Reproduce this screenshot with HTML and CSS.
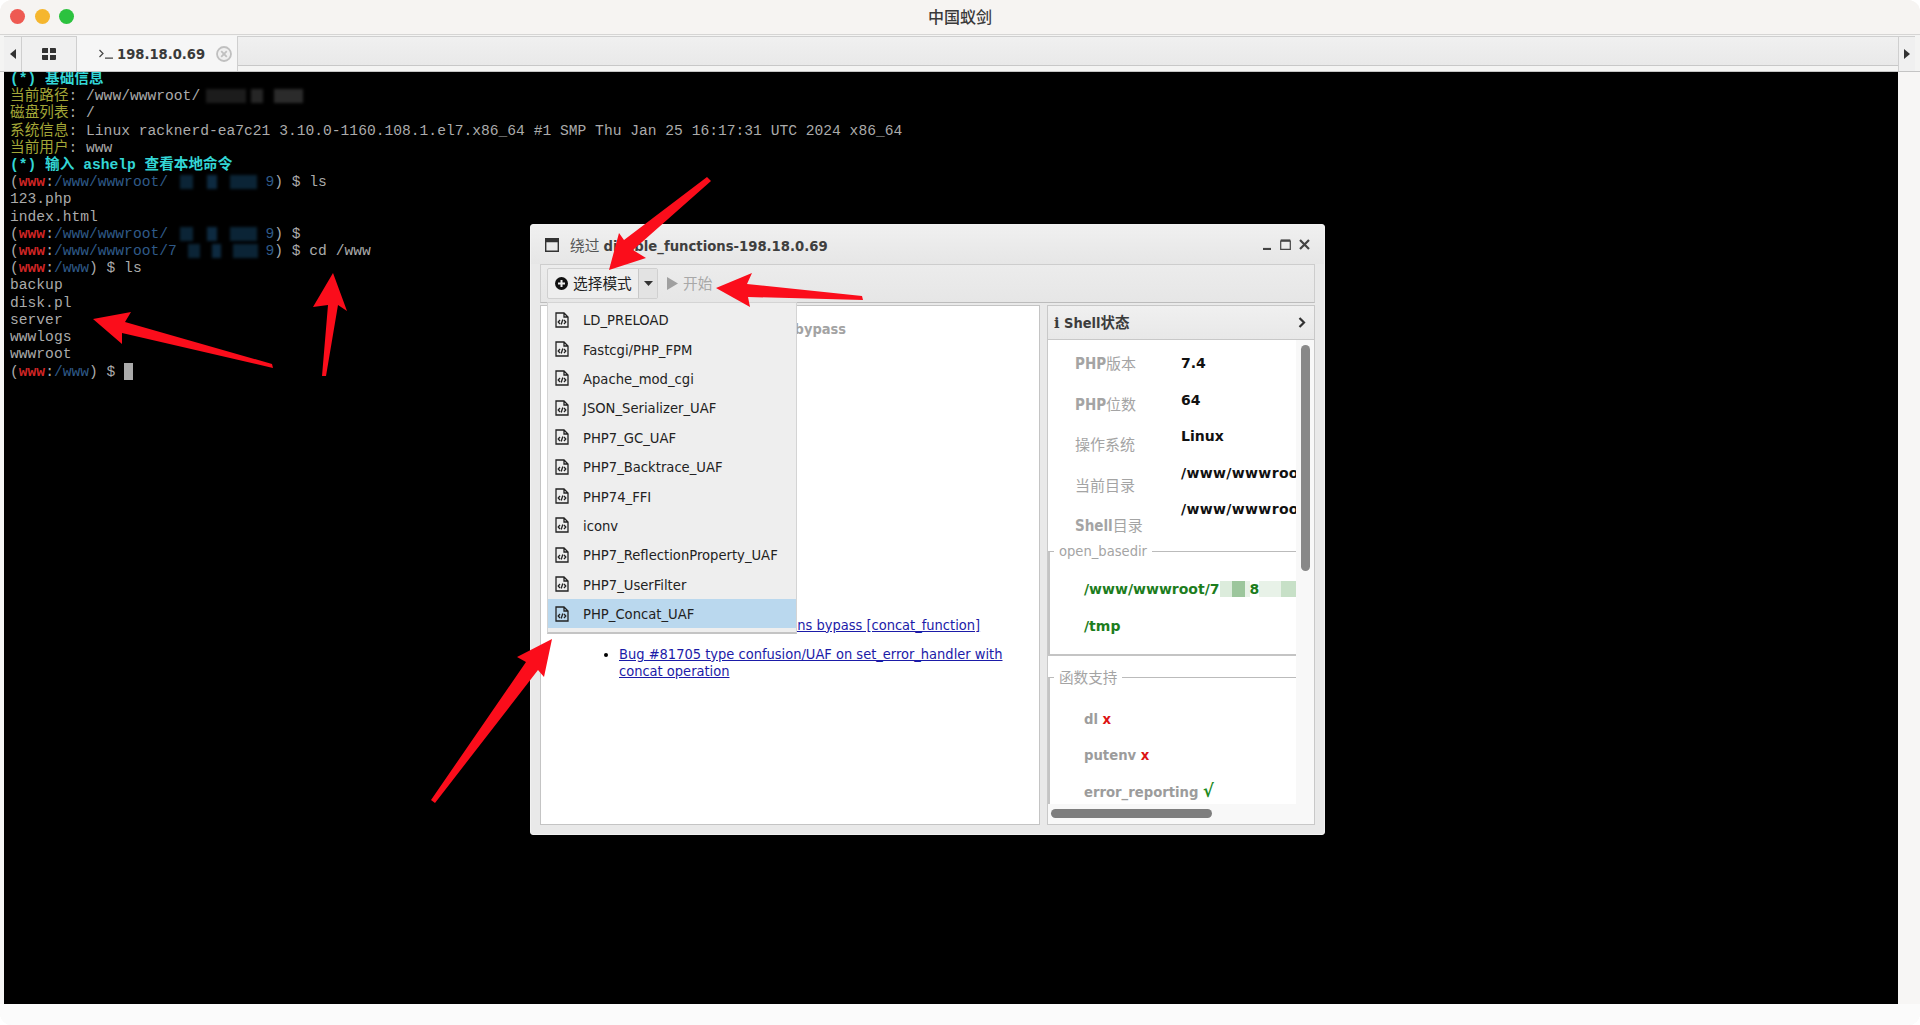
FILE: index.html
```html
<!DOCTYPE html>
<html lang="zh-CN">
<head>
<meta charset="utf-8">
<title>中国蚁剑</title>
<link rel="stylesheet" href="styles.css">
</head>
<body>
<div class="app">
  <header class="titlebar">
    <div class="lights"><i class="light red"></i><i class="light yellow"></i><i class="light green"></i></div>
    <div class="apptitle">中国蚁剑</div>
  </header>
  <nav class="tabbar">
    <div class="tabarrow"><svg width="6" height="10" viewBox="0 0 6 10"><path d="M6 0V10L0 5Z"/></svg></div>
    <div class="tabhome"><svg width="14" height="12" viewBox="0 0 14 12"><path d="M0 1q0-1 1-1H6V5H0ZM8 0H13q1 0 1 1V5H8ZM0 7H6V12H1q-1 0-1-1ZM8 7H14V11q0 1-1 1H8Z"/></svg></div>
    <div class="tab">
      <svg class="tabprompt" width="14" height="10" viewBox="0 0 14 10"><path d="M.5 1 4 4.5.5 8M6 9.2H14"/></svg>
      <span class="tabtext">198.18.0.69</span>
      <svg class="tabclose" width="16" height="16" viewBox="0 0 16 16"><circle cx="8" cy="8" r="7"/><path d="M5.2 5.2 10.8 10.8M10.8 5.2 5.2 10.8"/></svg>
    </div>
    <div class="tabrest"></div>
    <div class="tabarrow right"><svg width="6" height="10" viewBox="0 0 6 10"><path d="M0 0V10L6 5Z"/></svg></div>
  </nav>
  <main class="workspace">
    <pre class="terminal"><span class="head">(*) 基础信息</span>
<span class="label">当前路径</span>: /www/wwwroot/<i class="mask gray"></i>
<span class="label">磁盘列表</span>: /
<span class="label">系统信息</span>: Linux racknerd-ea7c21 3.10.0-1160.108.1.el7.x86_64 #1 SMP Thu Jan 25 16:17:31 UTC 2024 x86_64
<span class="label">当前用户</span>: www
<span class="head">(*) 输入 ashelp 查看本地命令</span>
(<b class="user">www</b>:<span class="path">/www/wwwroot/</span><i class="mask"></i><span class="path">9</span>) $ ls
123.php
index.html
(<b class="user">www</b>:<span class="path">/www/wwwroot/</span><i class="mask"></i><span class="path">9</span>) $
(<b class="user">www</b>:<span class="path">/www/wwwroot/7</span><i class="mask short"></i><span class="path">9</span>) $ cd /www
(<b class="user">www</b>:<span class="path">/www</span>) $ ls
backup
disk.pl
server
wwwlogs
wwwroot
(<b class="user">www</b>:<span class="path">/www</span>) $ <i class="cursor"></i></pre>
  </main>
  <div class="footer"></div>

  <section class="window">
    <div class="wintitle">
      <svg class="winicon" width="14" height="14" viewBox="0 0 14 14"><path d="M.7.7H13.3V13.3H.7ZM.7 3.6H13.3" /><path class="thick" d="M.7 2.2H13.3"/></svg>
      <span class="wintext"><span class="cn">绕过</span> <b>disable_functions-198.18.0.69</b></span>
      <div class="winctl">
        <svg width="10" height="10" viewBox="0 0 10 10"><path d="M1 9H9" class="ctl"/></svg>
        <svg width="11" height="11" viewBox="0 0 11 11"><path d="M.7 2H10.3V10.3H.7Z" class="ctlthin"/><path d="M.7 1.5H10.3" class="ctl"/></svg>
        <svg width="11" height="11" viewBox="0 0 11 11"><path d="M1 1 10 10M10 1 1 10" class="ctl"/></svg>
      </div>
    </div>
    <div class="toolbar">
      <div class="btngroup">
        <div class="btnmain">
          <svg width="13" height="13" viewBox="0 0 13 13"><circle cx="6.5" cy="6.5" r="6.5"/><path class="plus" d="M6.5 3V10M3 6.5H10"/></svg>
          <span class="btnlabel">选择模式</span>
        </div>
        <div class="btncaret"><svg width="9" height="5" viewBox="0 0 9 5"><path d="M0 0H9L4.5 5Z"/></svg></div>
      </div>
      <div class="btnstart">
        <svg width="11" height="13" viewBox="0 0 11 13"><path d="M0 0V13L11 6.5Z"/></svg>
        <span class="btnlabel">开始</span>
      </div>
    </div>
    <div class="winbody">
      <article class="doc">
        <h3 class="doctitle">PHP 7.3-8.1 disable_functions bypass</h3>
        <ul class="doclinks">
          <li><a href="#">PHP 7.3-8.1 disable_functions bypass [concat_function]</a></li>
          <li><a href="#">Bug #81705 type confusion/UAF on set_error_handler with concat operation</a></li>
        </ul>
      </article>
      <aside class="status">
        <div class="statushead">
          <span class="statustitle"><b class="infoi">i</b> Shell状态</span>
          <svg width="8" height="11" viewBox="0 0 8 11"><path d="M1.5 1 6 5.5 1.5 10"/></svg>
        </div>
        <div class="statusbody">
          <div class="statusscroll">
            <div class="info">
              <div class="infolabels">
                <div><b>PHP</b>版本</div>
                <div><b>PHP</b>位数</div>
                <div>操作系统</div>
                <div>当前目录</div>
                <div><b>Shell</b>目录</div>
              </div>
              <div class="infovalues">
                <div>7.4</div>
                <div>64</div>
                <div>Linux</div>
                <div class="pathval">/www/wwwroot/7f8e2a6c</div>
                <div class="pathval">/www/wwwroot/7f8e2a6c</div>
              </div>
            </div>
            <fieldset class="group">
              <legend>open_basedir</legend>
              <div class="rows ok">
                <div>/www/wwwroot/7<i class="greenmask"></i>8<i class="greenmask short"></i></div>
                <div>/tmp</div>
              </div>
            </fieldset>
            <fieldset class="group second">
              <legend>函数支持</legend>
              <div class="rows fn">
                <div>dl <span class="no">x</span></div>
                <div>putenv <span class="no">x</span></div>
                <div>error_reporting <span class="yes">√</span></div>
                <div>ini_set <span class="yes">√</span></div>
              </div>
            </fieldset>
          </div>
          <div class="vtrack"><div class="vthumb"></div></div>
          <div class="htrack"><div class="hthumb"></div></div>
          <div class="corner"></div>
        </div>
      </aside>
    </div>
    <ul class="menu">
      <li><svg class="fileicon" viewBox="0 0 14 16"><use href="#file"/></svg>LD_PRELOAD</li>
      <li><svg class="fileicon" viewBox="0 0 14 16"><use href="#file"/></svg>Fastcgi/PHP_FPM</li>
      <li><svg class="fileicon" viewBox="0 0 14 16"><use href="#file"/></svg>Apache_mod_cgi</li>
      <li><svg class="fileicon" viewBox="0 0 14 16"><use href="#file"/></svg>JSON_Serializer_UAF</li>
      <li><svg class="fileicon" viewBox="0 0 14 16"><use href="#file"/></svg>PHP7_GC_UAF</li>
      <li><svg class="fileicon" viewBox="0 0 14 16"><use href="#file"/></svg>PHP7_Backtrace_UAF</li>
      <li><svg class="fileicon" viewBox="0 0 14 16"><use href="#file"/></svg>PHP74_FFI</li>
      <li><svg class="fileicon" viewBox="0 0 14 16"><use href="#file"/></svg>iconv</li>
      <li><svg class="fileicon" viewBox="0 0 14 16"><use href="#file"/></svg>PHP7_ReflectionProperty_UAF</li>
      <li><svg class="fileicon" viewBox="0 0 14 16"><use href="#file"/></svg>PHP7_UserFilter</li>
      <li class="active"><svg class="fileicon" viewBox="0 0 14 16"><use href="#file"/></svg>PHP_Concat_UAF</li>
    </ul>
  </section>

  <svg class="arrows" width="1920" height="1025" viewBox="0 0 1920 1025">
    <defs>
      <g id="file"><path d="M1 1H9L13 5V15H1ZM9 1V5H13"/><path d="M5 8 3.2 10 5 12M9 8 10.8 10 9 12M7.8 7.5 6.2 12.5"/></g>
    </defs>
    <polygon points="707,177 711,181 633,250 646,258 609,270 619,233 624,240"/>
    <polygon points="716,288 752,273 747,284 862,296 863,300 748,297 750,307"/>
    <polygon points="93,319 131,312 125,322 272,364 273,368 122,333 122,344"/>
    <polygon points="333,273 313,307 328,305 322,376 326,376 338,305 347,311"/>
    <polygon points="552,639 517,657 526,662 431,800 435,803 538,670 544,677"/>
  </svg>
</div>
</body>
</html>
```
FILE: styles.css
```css
* { box-sizing: border-box; }
html, body { margin: 0; padding: 0; background: #fff; }
body { width: 1920px; height: 1025px; overflow: hidden; font-family: "DejaVu Sans Condensed", "DejaVu Sans", "Noto Sans CJK SC", sans-serif; }

.app { position: relative; width: 1920px; height: 1025px; display: flex; flex-direction: column; background: #f7f6f5; border-radius: 12px; overflow: hidden; }

/* title bar */
.titlebar { position: relative; height: 35px; flex: none; display: flex; align-items: center; justify-content: center; padding-bottom: 3px; background: #f6f4f2; border-bottom: 1px solid #d6d5d4; }
.lights { position: absolute; left: 10px; top: 9px; display: flex; gap: 9.5px; }
.light { display: block; width: 15px; height: 15px; border-radius: 50%; }
.light.red { background: #ee5a52; }
.light.yellow { background: #f5b62e; }
.light.green { background: #2cc23f; }
.apptitle { font: 500 16px "Noto Sans CJK SC", sans-serif; color: #3a3a3a; }

/* tabs */
.tabbar { height: 37px; flex: none; display: flex; padding: 1px 5px 0 4px; background: #f4f4f3; border-bottom: 1px solid #c4c4c4; }
.tabarrow { width: 18px; display: flex; align-items: center; justify-content: center; background: #f0f0f0; border-right: 1px solid #cfcfcf; border-top: 1px solid #cfcfcf; fill: #333; }
.tabarrow.right { width: 17px; border-right: 0; border-left: 1px solid #cfcfcf; }
.tabhome { width: 55px; display: flex; align-items: center; justify-content: center; background: #f0f0f0; border-right: 1px solid #cfcfcf; border-top: 1px solid #cfcfcf; fill: #333; }
.tab { width: 161px; display: flex; align-items: center; padding-left: 22px; background: #f6f6f6; border-right: 1px solid #cfcfcf; }
.tabprompt { fill: none; stroke: #444; stroke-width: 1.2; margin-right: 4px; }
.tabtext { font-weight: 700; font-size: 14.6px; color: #3a3a3a; }
.tabclose { margin-left: 11px; fill: #f0f0f0; stroke: #c0c0c0; stroke-width: 1.8; }
.tabrest { flex: 1; margin-bottom: 5px; background: linear-gradient(#f0f0f0, #e9e9e9); border-top: 1px solid #cfcfcf; border-bottom: 1px solid #c8c8c8; }

/* terminal */
.workspace { height: 932px; flex: none; margin: 0 22px 0 4px; background: #000; overflow: hidden; }
.terminal { margin: -1px 0 0; padding: 0 0 0 6px; font: 14.64px/17.2px "Liberation Mono", "Noto Sans CJK SC", monospace; color: #ababab; }
.head { color: #33d6d6; font-weight: 700; }
.label { color: #a3a637; }
.user { color: #d02525; }
.path { color: #2f5a88; }
.mask { display: inline-block; width: 11.1ch; height: 14px; vertical-align: -3px; filter: blur(1.5px); background: linear-gradient(90deg, transparent 0 12%, #0b2436 12% 26%, transparent 26% 40%, #0d2a40 40% 50%, transparent 50% 64%, #0b2436 64% 92%, transparent 92%); }
.mask.short { width: 10.1ch; }
.mask.gray { width: 13ch; background: linear-gradient(90deg, transparent 0 5%, #1c1c1c 5% 40%, transparent 40% 45%, #262626 45% 55%, transparent 55% 65%, #2b2b2b 65% 90%, transparent 90%); }
.cursor { display: inline-block; width: 9px; height: 17px; vertical-align: -4px; background: #aaa; }
.footer { flex: 1; background: #fbfbfb; }

/* floating window */
.window { position: absolute; left: 530px; top: 224px; width: 795px; height: 611px; display: flex; flex-direction: column; background: #e9e9e9; border-radius: 3px; border: 1px solid #f2f2f2; }
.wintitle { height: 39px; flex: none; display: flex; align-items: center; padding: 0 14px 0 14px; background: linear-gradient(#f0f0f0, #e6e6e6); color: #444; }
.winicon { fill: none; stroke: #333; stroke-width: 1.4; flex: none; }
.winicon .thick { stroke-width: 3; }
.wintext { margin-left: 11px; font-size: 14.7px; }
.wintext .cn { color: #555; }
.wintext b { color: #3f3f3f; }
.winctl { margin-left: auto; display: flex; align-items: center; gap: 8px; }
.ctl { fill: none; stroke: #444; stroke-width: 2.2; }
.ctlthin { fill: none; stroke: #444; stroke-width: 1.2; }

.toolbar { height: 39px; flex: none; margin: 0 9px; display: flex; align-items: center; gap: 9px; padding: 0 6px; background: linear-gradient(#ececec, #e6e6e6); border: 1px solid #cdcdcd; border-bottom-color: #bcbcbc; }
.btngroup { display: flex; height: 31px; border: 1px solid #d0d0d0; border-radius: 2px; background: #eee; }
.btnmain { width: 90px; display: flex; align-items: center; padding-left: 7px; gap: 5px; color: #222; fill: #111; }
.btnlabel { font: 14.7px/20px "Noto Sans CJK SC", sans-serif; margin-top: -2px; }
.plus { stroke: #eee; stroke-width: 2; }
.btncaret { width: 19px; display: flex; align-items: center; justify-content: center; border-left: 1px solid #c8c8c8; background: #e3e3e3; fill: #333; }
.btnstart { display: flex; align-items: center; gap: 5px; color: #a8a8a8; fill: #a0a0a0; }

.winbody { flex: 1; display: flex; gap: 7px; margin: 2px 9px 9px; min-height: 0; }
.doc { width: 500px; flex: none; background: #fff; border: 1px solid #c4c4c4; padding: 12.5px 0 0 0; overflow: hidden; }
.doctitle { margin: 0 0 0 30px; font-size: 14.5px; line-height: 20px; color: #a3a3a3; white-space: nowrap; }
.doclinks { margin: 278px 0 0; padding: 0 20px 0 78px; list-style: disc; font-size: 14.5px; line-height: 17.2px; color: #000; }
.doclinks li { margin-bottom: 12px; }
.doclinks a { color: #1b1ba8; }

/* status panel */
.status { flex: 1; min-width: 0; display: flex; flex-direction: column; border: 1px solid #c8c8c8; background: #f7f7f7; }
.statushead { height: 34px; flex: none; display: flex; align-items: center; justify-content: space-between; padding: 0 8px 0 6px; background: linear-gradient(#f0f0f0, #e8e8e8); border-bottom: 1px solid #c8c8c8; font-weight: 700; font-size: 14.5px; color: #3c3c3c; }
.statustitle { margin-top: -2px; }
.infoi { font-family: "DejaVu Serif", serif; }
.statushead svg { fill: none; stroke: #333; stroke-width: 2.2; }
.statusbody { flex: 1; min-height: 0; display: grid; grid-template-columns: 248px 1fr; grid-template-rows: 1fr 20px; }
.statusscroll { overflow: hidden; background: #fff; padding-top: 14px; }
.info { display: flex; margin-bottom: 5px; }
.infolabels { flex: none; width: 133px; padding-left: 27px; display: flex; flex-direction: column; gap: 20.5px; font: 15px/20px "DejaVu Sans Condensed", "Noto Sans CJK SC", sans-serif; color: #a4a4a4; }
.infovalues { display: flex; flex-direction: column; gap: 16.6px; margin-top: -1px; font: 700 14px/20px "DejaVu Sans", sans-serif; color: #111; white-space: nowrap; }
.pathval { letter-spacing: .35px; }
.group { margin: 0; padding: 18px 0 18px 34px; border: 0; border-top: 1px solid #bbb; border-left: 2px solid #c4c4c4; border-bottom: 2px solid #c4c4c4; min-width: 0; }
.group.second { margin-top: 12px; padding-top: 21px; border-bottom: 0; }
.group legend { margin-left: -30px; padding: 0 5px; font-size: 14.6px; line-height: 20px; color: #a4a4a4; }
.rows { display: flex; flex-direction: column; gap: 16.6px; font: 700 14px/20px "DejaVu Sans", sans-serif; white-space: nowrap; }
.rows.ok { color: #1d7d1d; }
.rows.fn { color: #9c9c9c; font: 700 14.7px/20px "DejaVu Sans Condensed", "DejaVu Sans", sans-serif; }
.no { color: #dd1414; }
.yes { color: #1d8a1d; font-size: 18px; line-height: 16px; }
.greenmask { display: inline-block; width: 30px; height: 16px; vertical-align: -3px; background: linear-gradient(90deg, #dcecdc 0 40%, #9cc69c 40% 85%, #e8f2e8 85%); }
.greenmask.short { width: 48px; background: linear-gradient(90deg, #e8f2e8 0 45%, #c7e0c7 45% 90%, #eef5ee 90%); }
.vtrack { padding: 5px 0 0 5px; background: #f8f8f8; }
.vthumb { width: 9px; height: 226px; border-radius: 5px; background: #888; }
.htrack { padding: 5px 0 0 3px; background: #f8f8f8; }
.hthumb { width: 161px; height: 9px; border-radius: 5px; background: #7e7e7e; }
.corner { background: #f8f8f8; }

/* mode menu */
.menu { position: absolute; left: 16px; top: 77px; width: 250px; height: 332px; margin: 0; padding: 2px 0 0; list-style: none; background: #eee; border: 1px solid #d4d4d4; border-bottom: 2px solid #c4c4c4; font-size: 14.65px; color: #222; }
.menu li { height: 29.4px; display: flex; align-items: center; padding-left: 7px; gap: 14px; }
.menu li.active { background: #bad8ee; }
.fileicon { width: 14px; height: 16px; flex: none; fill: none; stroke: #222; stroke-width: 1.3; }

/* callout arrows */
.arrows { position: absolute; left: 0; top: 0; pointer-events: none; }
.arrows polygon { fill: #fb0d1b; }
```
